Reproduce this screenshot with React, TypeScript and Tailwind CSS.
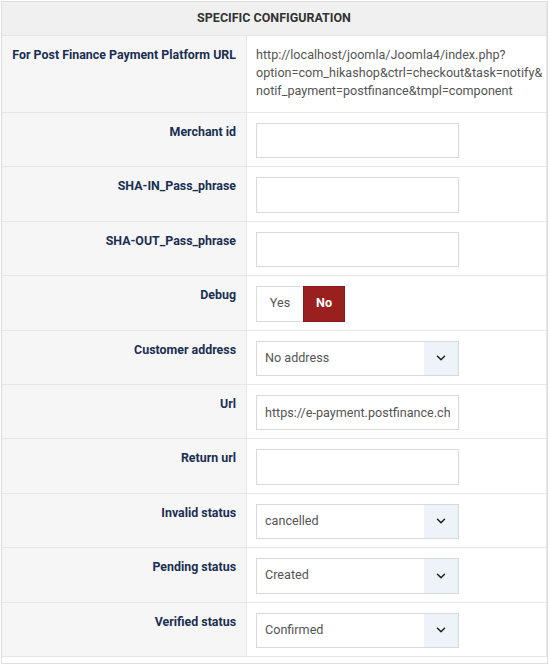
import React from "react";
import { ChevronDown } from "lucide-react";

const labelCls =
  "bg-[#f6f6f6] border-r border-b border-[#e6e6e6] text-right pr-[10px] pl-2 pt-[10px] text-[12.4px] leading-[18px] font-bold text-[#1b2f52]";
const valueCls = "border-b border-[#e6e6e6] pl-[9px] pt-[10px] pb-[8px]";

function TextInput({ value = "" }: { value?: string }) {
  return (
    <input
      type="text"
      readOnly
      value={value}
      className="block w-[203px] h-[35.4px] border border-[#d6d9dd] bg-white px-[8px] text-[12.6px] text-[#555] outline-none"
      style={{ fontFamily: "Roboto, 'Liberation Sans', sans-serif" }}
    />
  );
}

function Select({ value }: { value: string }) {
  return (
    <div className="w-[203px] h-[35.4px] border border-[#d6d9dd] bg-white flex items-stretch text-[12.6px] text-[#555]">
      <div className="flex-1 flex items-center pl-[8px]">{value}</div>
      <div className="w-[34px] bg-[#eef3fa] flex items-center justify-center">
        <ChevronDown size={14} strokeWidth={2.6} className="text-[#222]" />
      </div>
    </div>
  );
}

function Row({ label, children }: { label: string; children: React.ReactNode }) {
  return (
    <>
      <div className={labelCls}>{label}</div>
      <div className={valueCls}>{children}</div>
    </>
  );
}

export default function App() {
  return (
    <div
      className="bg-white w-[550px] h-[668px]"
      style={{ fontFamily: "Roboto, 'Liberation Sans', sans-serif" }}
    >
      <div className="ml-[1px] mt-[1px] w-[547px] border border-[#dedede] pb-[6px]">
        <div className="w-[545px] border-r border-[#e6e6e6]">
          <div className="h-[34px] bg-[#f0f0f0] border-b border-[#e3e3e3] flex items-center justify-center text-[12.5px] font-bold uppercase text-[#333]">
            Specific configuration
          </div>
          <div className="grid grid-cols-[245px_1fr]">
            <div className={labelCls + " pb-[12px]"}>For Post Finance Payment Platform URL</div>
            <div className="border-b border-[#e6e6e6] pl-[9px] pt-[10px] pb-[12px] text-[12.6px] leading-[18px] text-[#555] whitespace-nowrap">
              http://localhost/joomla/Joomla4/index.php?
              <br />
              option=com_hikashop&amp;ctrl=checkout&amp;task=notify&amp;
              <br />
              notif_payment=postfinance&amp;tmpl=component
            </div>
            <Row label="Merchant id">
              <TextInput />
            </Row>
            <Row label="SHA-IN_Pass_phrase">
              <TextInput />
            </Row>
            <Row label="SHA-OUT_Pass_phrase">
              <TextInput />
            </Row>
            <Row label="Debug">
              <div className="flex h-[35.4px] text-[12.6px]">
                <div className="w-[47px] border border-[#dcdcdc] border-r-0 flex items-center justify-center text-[#555]">
                  Yes
                </div>
                <div className="w-[42px] bg-[#9a1f1f] border border-[#8a1a1a] flex items-center justify-center text-white font-bold">
                  No
                </div>
              </div>
            </Row>
            <Row label="Customer address">
              <Select value="No address" />
            </Row>
            <Row label="Url">
              <TextInput value="https://e-payment.postfinance.ch/ncol/prod/orderstandard.asp" />
            </Row>
            <Row label="Return url">
              <TextInput />
            </Row>
            <Row label="Invalid status">
              <Select value="cancelled" />
            </Row>
            <Row label="Pending status">
              <Select value="Created" />
            </Row>
            <Row label="Verified status">
              <Select value="Confirmed" />
            </Row>
          </div>
        </div>
      </div>
    </div>
  );
}
